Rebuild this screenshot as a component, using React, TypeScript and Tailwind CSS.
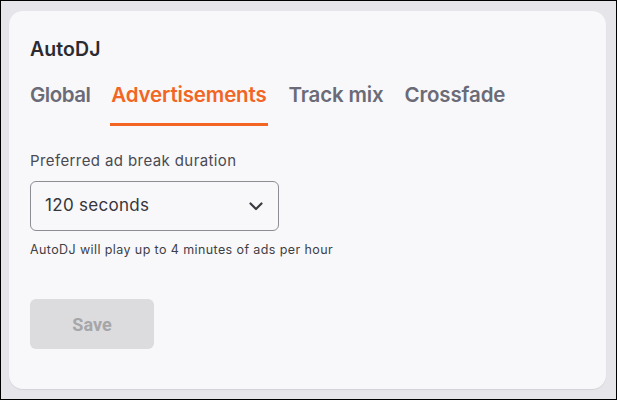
import React from "react";

export default function App() {
  const tabs = [
    { t: "Global", cls: "tracking-[-0.5px] text-[#6b6b78]" },
    { t: "Advertisements", cls: "ml-[21px] tracking-[-0.15px] text-[#f26522]" },
    { t: "Track mix", cls: "ml-[22px] tracking-[-0.15px] text-[#6b6b78]" },
    { t: "Crossfade", cls: "ml-[21px] tracking-[-0.15px] text-[#6b6b78]" },
  ];
  return (
    <div
      className="w-[617px] h-[400px] border border-black bg-[#e6e5e9] pt-[10px] pl-[8px] pr-[10px] pb-[10px] flex"
      style={{ fontFamily: "Inter, 'Noto Sans', sans-serif" }}
    >
      <div className="flex-1 bg-[#f8f8fa] rounded-[14px] shadow-[0_1px_1px_rgba(0,0,0,0.08)] pl-[21px] pt-[26px] flex flex-col">
        <h1 className="text-[19.5px] leading-[24px] font-semibold text-[#2b2b31] tracking-[0.1px]">AutoDJ</h1>
        <div className="flex mt-[21px]">
          {tabs.map((tab, i) => (
            <div key={tab.t} className={"flex flex-col " + tab.cls}>
              <span className="text-[20.5px] leading-[26px] font-semibold">{tab.t}</span>
              <div className={"h-[3px] mt-[15px] -mx-[1px] " + (i === 1 ? "bg-[#f26522]" : "bg-transparent")} />
            </div>
          ))}
        </div>
        <label className="mt-[25px] text-[15px] leading-[20px] text-[#4a4a52] tracking-[0.4px]">Preferred ad break duration</label>
        <div className="mt-[10px] w-[249px] h-[50px] border-[1.5px] border-[#8d8d94] rounded-[6px] flex items-center justify-between pl-[14px] pr-[14px]">
          <span className="text-[17px] text-[#35353b] tracking-[0.3px]">120 seconds</span>
          <svg width="16" height="16" viewBox="0 0 16 16" fill="none">
            <path d="M2.5 5.5l5.5 5.5 5.5-5.5" stroke="#3a3a40" strokeWidth="2.2" strokeLinecap="round" strokeLinejoin="round" />
          </svg>
        </div>
        <p className="mt-[11px] text-[12.5px] leading-[16px] text-[#3f3f46] tracking-[0.4px]">AutoDJ will play up to 4 minutes of ads per hour</p>
        <button
          disabled
          className="mt-[41px] w-[124px] h-[50px] rounded-[6px] bg-[#dcdcde] text-[#a6a6a9] text-[18px] font-bold"
          style={{ fontFamily: "Roboto, sans-serif" }}
        >
          Save
        </button>
      </div>
    </div>
  );
}
